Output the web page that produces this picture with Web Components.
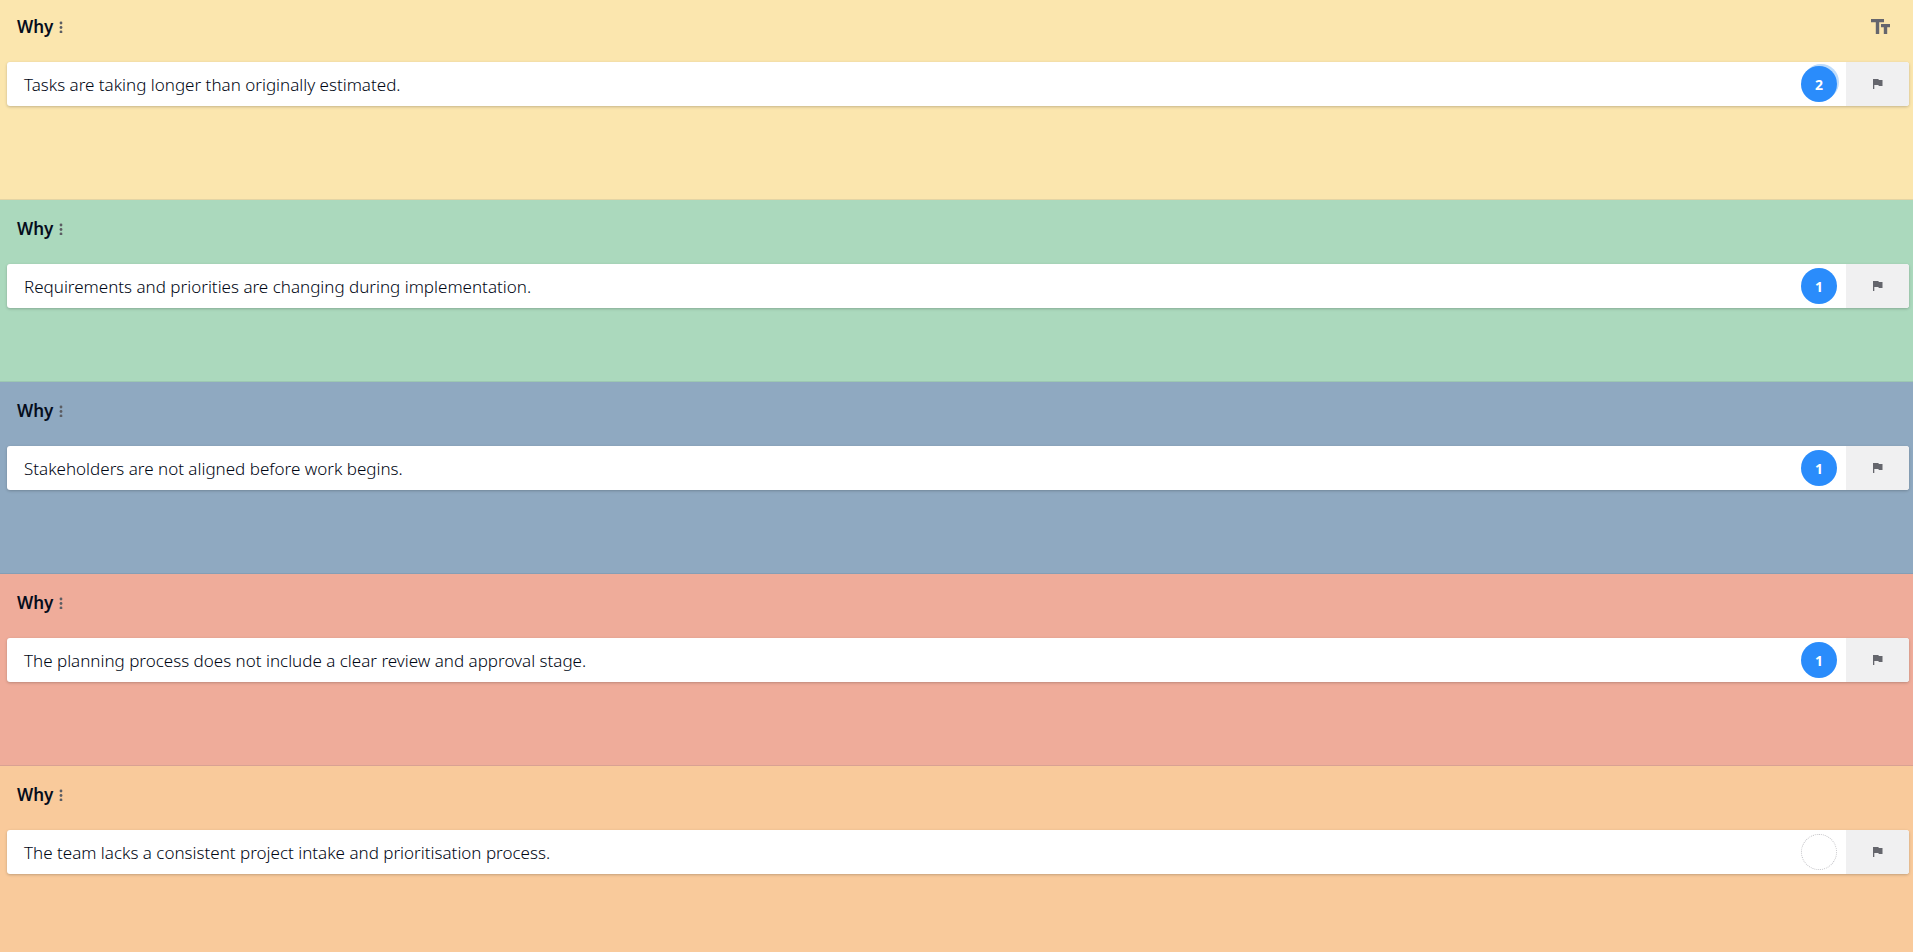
<!DOCTYPE html>
<html lang="en">
<head>
  <meta charset="utf-8">
  <title>Five whys</title>
  <style>
    html, body {
      margin: 0;
      height: 100%;
    }
    body {
      font-family: "Noto Sans", "Open Sans", sans-serif;
      color: #050d1c;
    }
  </style>
</head>
<body>
  <why-board>
    <why-column color="#fbe6ae" space="94">
      <text-size-button slot="tools"></text-size-button>
      <why-card votes="2" recent>Tasks are taking longer than originally estimated.</why-card>
    </why-column>
    <why-column color="#abd9bd" space="74">
      <why-card votes="1">Requirements and priorities are changing during implementation.</why-card>
    </why-column>
    <why-column color="#8fa9c1" space="84">
      <why-card votes="1">Stakeholders are not aligned before work begins.</why-card>
    </why-column>
    <why-column color="#efac9a" space="84">
      <why-card votes="1">The planning process does not include a clear review and approval stage.</why-card>
    </why-column>
    <why-column color="#f9ca9b" space="74">
      <why-card votes="0">The team lacks a consistent project intake and prioritisation process.</why-card>
    </why-column>
  </why-board>

  <template id="why-board">
    <style>
      :host {
        display: flex;
        flex-direction: column;
        min-height: 100%;
      }
      ::slotted(:not(:first-child)) {
        padding-top: 2px;
      }
      ::slotted(:last-child) {
        flex: 1;
        box-shadow: none;
      }
    </style>
    <slot></slot>
  </template>

  <template id="why-column">
    <style>
      :host {
        display: block;
        box-sizing: border-box;
        background: var(--column-color);
        box-shadow: inset 0 -1px rgba(60, 80, 100, 0.12);
      }
      header {
        display: flex;
        align-items: center;
        height: 54px;
        padding: 0 22px 0 17px;
        margin-bottom: 8px;
      }
      h2 {
        margin: 0;
        font-size: 17px;
        font-weight: 600;
        line-height: 24px;
      }
      button {
        display: flex;
        padding: 4px 6px;
        border: 0;
        background: none;
        color: #5b5d63;
        cursor: pointer;
      }
      .tools {
        margin-left: auto;
      }
      .cards {
        padding: 0 4px var(--column-space) 7px;
      }
    </style>
    <header>
      <h2>Why</h2>
      <button type="button" aria-label="Column menu">
        <svg width="4" height="12" viewBox="0 0 4 12" fill="currentColor">
          <circle cx="2" cy="2" r="1.4"/>
          <circle cx="2" cy="6.5" r="1.4"/>
          <circle cx="2" cy="11" r="1.4"/>
        </svg>
      </button>
      <div class="tools"><slot name="tools"></slot></div>
    </header>
    <div class="cards"><slot></slot></div>
  </template>

  <template id="text-size-button">
    <style>
      :host {
        display: block;
      }
      button {
        display: flex;
        padding: 0;
        border: 0;
        background: none;
        color: #65666d;
        cursor: pointer;
      }
    </style>
    <button type="button" aria-label="Text size">
      <svg width="20" height="16" viewBox="0 0 20 16" fill="currentColor">
        <path d="M0 0h13v3.200H8.200V15H4.800V3.200H0zM10 5h9v3.200h-2.800V15h-3.400V8.200H10z"/>
      </svg>
    </button>
  </template>

  <template id="why-card">
    <style>
      :host {
        display: flex;
        align-items: stretch;
        min-height: 44px;
        border-radius: 3px;
        background: #ffffff;
        box-shadow: 0 1px 3px rgba(0, 0, 0, 0.22);
      }
      p {
        flex: 1;
        align-self: center;
        margin: 0;
        padding: 2px 17px 0;
        color: #000614;
        font-size: 17px;
        font-weight: 300;
        line-height: 24px;
      }
      button {
        padding: 0;
        border: 0;
        font-family: inherit;
        cursor: pointer;
      }
      .votes {
        align-self: center;
        width: 36px;
        height: 36px;
        margin-right: 9px;
        border-radius: 50%;
        background: #2a8cfb;
        color: #ffffff;
        font-size: 14px;
        font-weight: 700;
      }
      :host([recent]) .votes {
        box-shadow: 2px -2px #bddcfc;
      }
      :host([votes="0"]) .votes {
        border: 1px dotted #c4c4c8;
        background: #ffffff;
      }
      .flag {
        display: flex;
        align-items: center;
        justify-content: center;
        width: 63px;
        border-radius: 0 3px 3px 0;
        background: #f0f0f1;
        color: #65666d;
      }
    </style>
    <p><slot></slot></p>
    <button type="button" class="votes" aria-label="Votes"></button>
    <button type="button" class="flag" aria-label="Flag">
      <svg width="10" height="10" viewBox="0 0 10 10" fill="currentColor">
        <path d="M0 0h5.400l.4 1H9.500v6H5.800l-.4-1H1.300v4H0z"/>
      </svg>
    </button>
  </template>

  <script>
    class TemplateElement extends HTMLElement {
      constructor() {
        super();
        const template = document.getElementById(this.localName);
        this.attachShadow({mode: 'open'});
        this.shadowRoot.appendChild(template.content.cloneNode(true));
      }
    }

    class WhyBoard extends TemplateElement {}

    class WhyColumn extends TemplateElement {
      connectedCallback() {
        this.style.setProperty('--column-color', this.getAttribute('color'));
        this.style.setProperty('--column-space', `${this.getAttribute('space')}px`);
      }
    }

    class TextSizeButton extends TemplateElement {}

    class WhyCard extends TemplateElement {
      connectedCallback() {
        const votes = Number(this.getAttribute('votes'));
        const button = this.shadowRoot.querySelector('.votes');
        button.textContent = votes > 0 ? votes : '';
        button.setAttribute('aria-label', `Votes: ${votes}`);
      }
    }

    window.customElements.define('why-board', WhyBoard);
    window.customElements.define('why-column', WhyColumn);
    window.customElements.define('text-size-button', TextSizeButton);
    window.customElements.define('why-card', WhyCard);
  </script>
</body>
</html>
